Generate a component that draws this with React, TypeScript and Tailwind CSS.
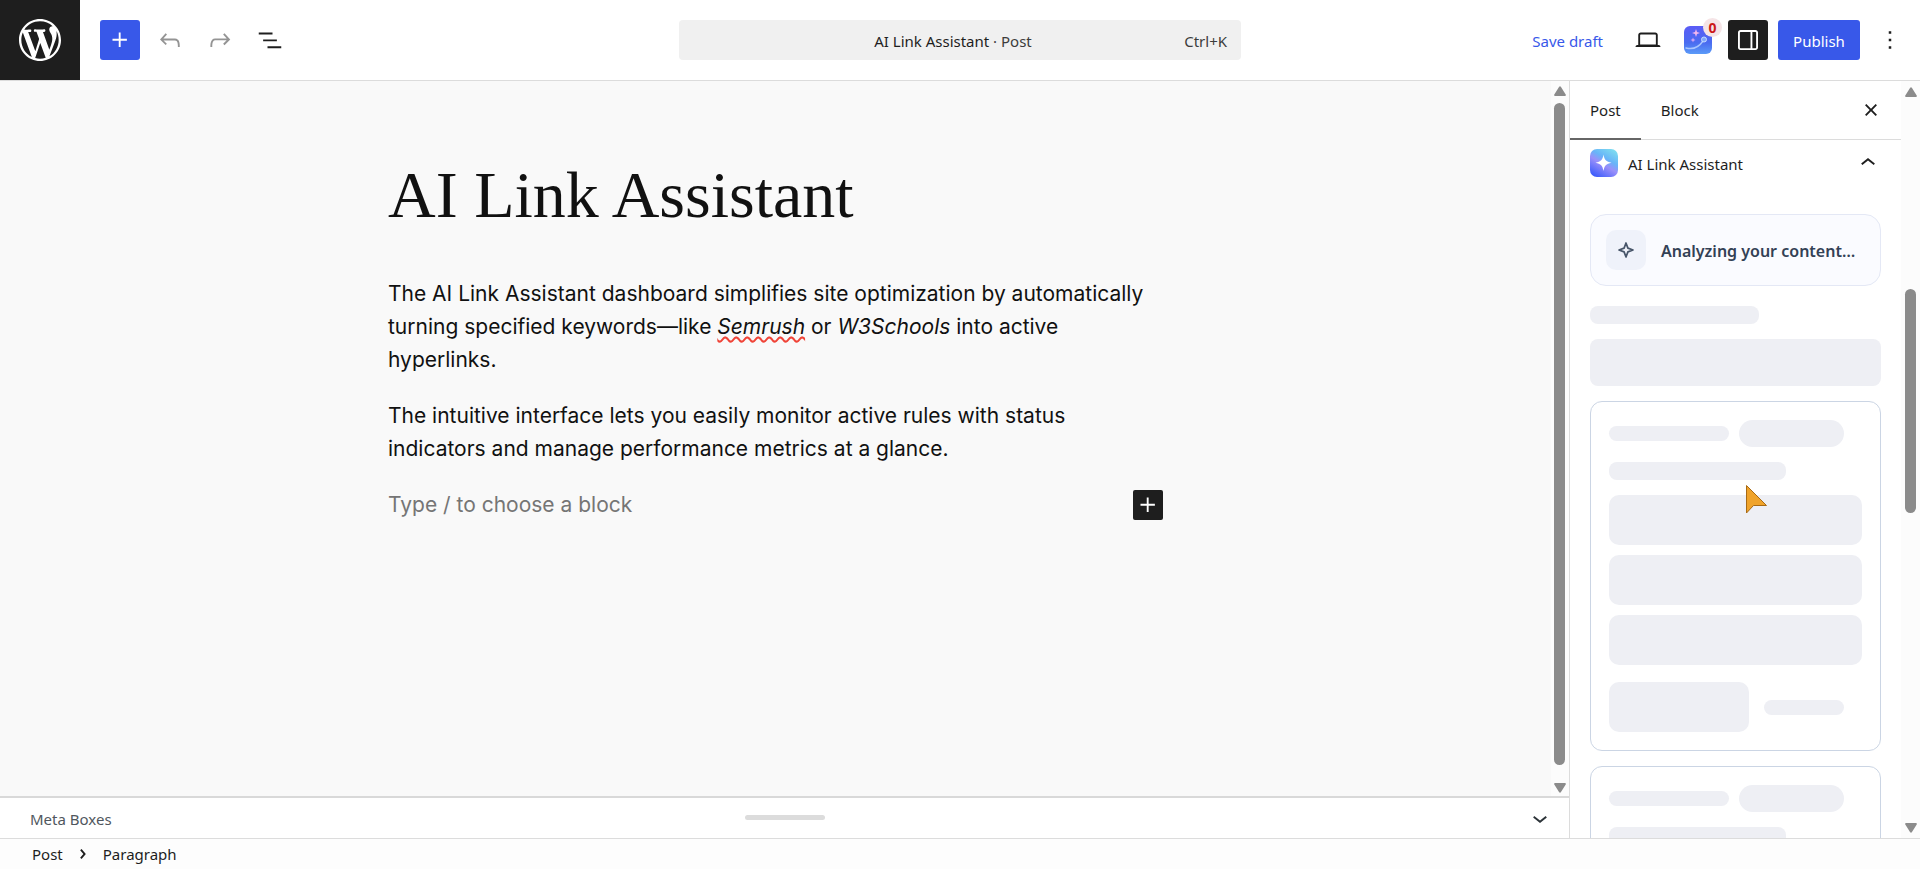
import React, { useState } from 'react';

const icons = {
  wordpress:
    'M20 10c0-5.51-4.49-10-10-10C4.48 0 0 4.49 0 10c0 5.52 4.48 10 10 10 5.51 0 10-4.48 10-10zM7.78 15.37L4.37 6.22c.55-.02 1.17-.08 1.17-.08.5-.06.44-1.13-.06-1.11 0 0-1.45.11-2.37.11-.18 0-.37 0-.58-.01C4.12 2.69 6.87 1.11 10 1.11c2.33 0 4.45.87 6.05 2.34-.68-.11-1.65.39-1.65 1.58 0 .74.45 1.36.9 2.1.35.61.55 1.36.55 2.46 0 1.49-1.4 5-1.4 5l-3.03-8.37c.54-.02.82-.17.82-.17.5-.05.44-1.25-.06-1.22 0 0-1.44.12-2.38.12-.87 0-2.33-.12-2.33-.12-.5-.03-.56 1.2-.06 1.22l.92.08 1.26 3.41zM17.41 10c.24-.64.74-1.87.43-4.25.7 1.29 1.05 2.71 1.05 4.25 0 3.29-1.73 6.24-4.4 7.78.97-2.59 1.94-5.2 2.92-7.78zM6.1 18.09C3.12 16.65 1.11 13.53 1.11 10c0-1.3.23-2.48.72-3.59C3.25 10.3 4.67 14.2 6.1 18.09zm4.03-6.63l2.58 6.98c-.86.29-1.76.45-2.71.45-.79 0-1.57-.11-2.29-.33.81-2.38 1.62-4.74 2.42-7.1z',
  plus: 'M11 12.5V17.5H12.5V12.5H17.5V11H12.5V6H11V11H6V12.5H11Z',
  undo: 'M18.3 11.7c-.6-.6-1.4-.9-2.3-.9H6.7l2.9-3.3-1.1-1-4.5 5L8.5 16l1-1-2.7-2.7H16c.5 0 .9.2 1.3.5 1 1 1 3.4 1 4.5v.3h1.5v-.2c0-1.5 0-4.3-1.5-5.7z',
  redo: 'M15.6 6.5l-1.1 1 2.9 3.3H8c-.9 0-1.7.3-2.3.9-1.4 1.5-1.4 4.2-1.4 5.6v.2h1.5v-.3c0-1.1 0-3.5 1-4.5.3-.3.7-.5 1.3-.5h9.2L14.5 15l1.1 1.1 4.6-4.6-4.6-5z',
  listView: 'M3 6h11v1.5H3V6Zm3.5 5.5h11V13h-11v-1.5ZM21 17H10v1.5h11V17Z',
  desktop:
    'M20.5 16h-.7V8c0-1.1-.9-2-2-2H6.2c-1.1 0-2 .9-2 2v8h-.7c-.8 0-1.5.7-1.5 1.5h20c0-.8-.7-1.5-1.5-1.5zM5.7 8c0-.3.2-.5.5-.5h11.6c.3 0 .5.2.5.5v7.6H5.7V8z',
  drawer:
    'M18 4H6c-1.1 0-2 .9-2 2v12c0 1.1.9 2 2 2h12c1.1 0 2-.9 2-2V6c0-1.1-.9-2-2-2zm-4 14.5H6c-.3 0-.5-.2-.5-.5V6c0-.3.2-.5.5-.5h8v13zm4.5-.5c0 .3-.2.5-.5.5h-2.5v-13H18c.3 0 .5.2.5.5v12z',
  more: 'M13 19h-2v-2h2v2zm0-6h-2v-2h2v2zm0-6h-2V5h2v2z',
  close:
    'M12 13.06l3.712 3.713 1.061-1.06L13.061 12l3.712-3.712-1.06-1.06L12 10.938 8.288 7.227l-1.061 1.06L10.939 12l-3.712 3.712 1.06 1.061L12 13.061z',
  chevronUp: 'M6.5 12.4L12 8l5.5 4.4-.9 1.2L12 10l-4.5 3.6-1-1.2z',
  chevronDown: 'M17.5 11.6L12 16l-5.5-4.4.9-1.2L12 14l4.5-3.6 1 1.2z',
  chevronRight: 'M10.8622 8.04053L14.2805 12.0286L10.8622 16.0167L9.72327 15.0405L12.3049 12.0286L9.72327 9.01672L10.8622 8.04053Z',
};

function Icon({ name, className = 'size-[30px]' }: { name: keyof typeof icons; className?: string }) {
  return (
    <svg viewBox="0 0 24 24" className={`${className} shrink-0`} fill="currentColor" aria-hidden="true">
      <path d={icons[name]} />
    </svg>
  );
}

function LinkPluginIcon() {
  return (
    <svg viewBox="0 0 28 28" className="size-7" aria-hidden="true">
      <defs>
        <linearGradient id="plugin-bg" x1="0" y1="0" x2="0" y2="1">
          <stop offset="0" stopColor="#5b5cf6" />
          <stop offset="0.6" stopColor="#4a6cf0" />
          <stop offset="1" stopColor="#5b9bf8" />
        </linearGradient>
      </defs>
      <rect width="28" height="28" rx="6" fill="url(#plugin-bg)" />
      <path d="M12 3l1 3 3 1-3 1-1 3-1-3-3-1 3-1z" fill="#f3b7ee" />
      <path d="M9 11.500l.7 1.800 1.800.7-1.800.7L9 16.500l-.7-1.800-1.800-.7 1.800-.7z" fill="#d6a8f5" />
      <path d="M2 22c8 2 13-1 17-7" fill="none" stroke="#a9c6ff" strokeWidth="1.500" strokeLinecap="round" />
      <circle cx="20" cy="13.500" r="2.500" fill="#7fa6fb" stroke="#c5dbff" />
    </svg>
  );
}

function AssistantIcon() {
  return (
    <svg viewBox="0 0 28 28" className="size-7 shrink-0" aria-hidden="true">
      <defs>
        <linearGradient id="assistant-bg" x1="0.2" y1="1" x2="0.8" y2="0">
          <stop offset="0" stopColor="#3b5bfb" />
          <stop offset="0.450" stopColor="#9a90fa" />
          <stop offset="0.650" stopColor="#68b4f8" />
          <stop offset="1" stopColor="#7ddcf0" />
        </linearGradient>
      </defs>
      <rect width="28" height="28" rx="7" fill="url(#assistant-bg)" />
      <path d="M13.500 5.500C14.500 11 16 12.500 21.500 13.700C16 15 14.500 16.500 13.500 22C12.500 16.500 11 15 5.500 13.700C11 12.500 12.500 11 13.500 5.500z" fill="#fff" />
    </svg>
  );
}

function Arrow({ down = false }: { down?: boolean }) {
  return (
    <svg viewBox="0 0 12 10" className="h-2.5 w-3 shrink-0" fill="#8b8b8b" aria-hidden="true">
      {down ? (
        <path d="M1.200 0h9.600a1 1 0 0 1 .9 1.600L7 8.900a1.200 1.200 0 0 1-2 0L.3 1.600A1 1 0 0 1 1.200 0z" />
      ) : (
        <path d="M1.200 10h9.600a1 1 0 0 0 .9-1.600L7 1.100a1.200 1.200 0 0 0-2 0L.3 8.400A1 1 0 0 0 1.200 10z" />
      )}
    </svg>
  );
}

function SkeletonCard() {
  return (
    <div className="flex shrink-0 flex-col rounded-xl border border-[#cbd5e4] p-[18px]">
      <div className="flex items-center gap-2.5">
        <div className="h-[15px] w-[120px] rounded-full bg-[#eeeff4]" />
        <div className="h-[27px] w-[105px] rounded-full bg-[#eeeff4]" />
      </div>
      <div className="mt-[15px] h-[18px] w-[177px] rounded-lg bg-[#eeeff4]" />
      <div className="mt-[15px] flex flex-col gap-2.5">
        <div className="h-[50px] rounded-[10px] bg-[#eeeff4]" />
        <div className="h-[50px] rounded-[10px] bg-[#eeeff4]" />
        <div className="h-[50px] rounded-[10px] bg-[#eeeff4]" />
      </div>
      <div className="mt-[17px] flex items-center gap-[15px]">
        <div className="h-[50px] w-[140px] rounded-[10px] bg-[#eeeff4]" />
        <div className="h-[15px] w-20 rounded-full bg-[#eeeff4]" />
      </div>
    </div>
  );
}

function Header() {
  return (
    <header className="flex h-[81px] shrink-0 items-center border-b border-[#dcdcdc] bg-white">
      <div className="flex flex-1 items-center">
        <a href="#" aria-label="View Posts" className="flex size-20 items-center justify-center bg-[#1e1e1e] text-white">
          <svg viewBox="0 0 20 20" className="size-[42px]" fill="currentColor" aria-hidden="true">
            <path d={icons.wordpress} />
          </svg>
        </a>
        <div className="ml-5 flex items-center gap-2.5">
          <button aria-label="Block Inserter" className="flex size-10 items-center justify-center rounded-[3px] bg-[#3858e9] text-white">
            <Icon name="plus" />
          </button>
          <button aria-label="Undo" className="flex size-10 items-center justify-center text-[#949494]">
            <Icon name="undo" />
          </button>
          <button aria-label="Redo" className="flex size-10 items-center justify-center text-[#949494]">
            <Icon name="redo" />
          </button>
          <button aria-label="Document Overview" className="flex size-10 items-center justify-center">
            <Icon name="listView" />
          </button>
        </div>
      </div>

      <button className="grid h-10 w-[562px] grid-cols-[1fr_auto_1fr] items-center rounded-[4px] bg-[#f0f0f0] pt-0.5 pr-3.5">
        <span />
        <span>
          AI Link Assistant <span className="text-[#3c3c3c]">· Post</span>
        </span>
        <span className="text-right text-[#3c3c3c]">Ctrl+K</span>
      </button>

      <div className="flex flex-1 items-center justify-end gap-2.5">
        <button className="px-[15px] pt-0.5 text-[#3858e9]">Save draft</button>
        <button aria-label="View" className="flex size-10 items-center justify-center">
          <Icon name="desktop" />
        </button>
        <button aria-label="Link plugin" className="relative flex size-10 items-center justify-center">
          <LinkPluginIcon />
          <span className="absolute -top-0.5 -right-1 flex size-[19px] items-center justify-center rounded-full bg-[#f5e4e6] text-sm font-bold text-[#cc1818]">
            0
          </span>
        </button>
        <button aria-label="Settings" className="flex size-10 items-center justify-center rounded-[3px] bg-[#1e1e1e] text-white">
          <Icon name="drawer" />
        </button>
        <button className="h-10 w-[82px] rounded-[3px] bg-[#3858e9] pt-0.5 text-white">Publish</button>
        <button aria-label="Options" className="mr-2.5 flex size-10 items-center justify-center">
          <Icon name="more" />
        </button>
      </div>
    </header>
  );
}

function Canvas() {
  return (
    <div className="flex min-h-0 flex-1 bg-[#f9f9f9]">
      <main className="flex-1 overflow-hidden pt-[70px]">
        <article className="mx-auto w-[775px] font-['Inter',sans-serif] text-[21px] leading-[33px] text-[#111]">
          <h1 className="font-['Liberation_Serif',serif] text-[66px] leading-[88px] font-normal">AI Link Assistant</h1>
          <p className="mt-[38px]">
            The AI Link Assistant dashboard simplifies site optimization by automatically turning specified keywords—like{' '}
            <em className="underline decoration-[#f04438] decoration-wavy decoration-auto underline-offset-2">Semrush</em> or{' '}
            <em>W3Schools</em> into active hyperlinks.
          </p>
          <p className="mt-[23px]">
            The intuitive interface lets you easily monitor active rules with status indicators and manage performance metrics at a
            glance.
          </p>
          <div className="mt-[23px] flex items-center justify-between">
            <p className="text-[#757575]">Type / to choose a block</p>
            <button aria-label="Add block" className="flex size-[30px] items-center justify-center rounded-[2px] bg-[#1e1e1e] text-white">
              <Icon name="plus" />
            </button>
          </div>
        </article>
      </main>
      <div className="flex w-[18px] shrink-0 flex-col items-center bg-[#fcfcfc] pt-[5px] pr-px pb-[3px]">
        <Arrow />
        <div className="mt-[7px] mb-[18px] w-[11px] flex-1 rounded-full bg-[#8b8b8b]" />
        <Arrow down />
      </div>
    </div>
  );
}

function MetaBoxes() {
  return (
    <div className="relative flex h-[42px] shrink-0 items-center justify-between border-t-2 border-[#d9d9d9] bg-white pr-3.5 pl-[30px] text-[#50575e]">
      <span className="pt-0.5">Meta Boxes</span>
      <button aria-label="Toggle meta boxes" className="text-[#2c3338]">
        <Icon name="chevronDown" />
      </button>
      <div className="absolute top-[17px] left-1/2 h-[5px] w-20 -translate-x-1/2 rounded-full bg-[#dcdcdc]" />
    </div>
  );
}

function Sidebar() {
  const [tab, setTab] = useState('Post');

  return (
    <aside className="flex w-[351px] shrink-0 border-l border-[#dcdcdc] bg-white">
      <div className="flex min-w-0 flex-1 flex-col overflow-hidden">
        <div className="flex h-[59px] shrink-0 items-center border-b border-[#dcdcdc] pr-[15px]">
          {['Post', 'Block'].map((name) => (
            <button
              key={name}
              onClick={() => setTab(name)}
              className={`h-[59px] border-b-2 px-5 pt-0.5 ${tab === name ? 'border-[#666]' : 'border-transparent'}`}
            >
              {name}
            </button>
          ))}
          <button aria-label="Close Settings" className="ml-auto">
            <Icon name="close" />
          </button>
        </div>

        <div className="flex flex-col px-5 pt-[9px]">
          <button className="flex h-7 shrink-0 items-center text-left">
            <AssistantIcon />
            <span className="ml-2.5 flex-1 pt-0.5">AI Link Assistant</span>
            <Icon name="chevronUp" className="-mr-0.5 size-[30px]" />
          </button>

          <div className="mt-[37px] flex h-[72px] shrink-0 items-center gap-[15px] rounded-2xl border border-[#e4e8f5] bg-[#fafbff] px-[15px]">
            <div className="flex size-10 items-center justify-center rounded-[10px] bg-[#eff2fa]">
              <svg viewBox="0 0 16 16" className="size-4" fill="none" stroke="#475569" strokeWidth="1.700" strokeLinejoin="round" aria-hidden="true">
                <path d="M8 1L9.900 6.100L15 8L9.900 9.900L8 15L6.100 9.900L1 8L6.100 6.100z" />
              </svg>
            </div>
            <p className="pt-0.5 text-base font-semibold text-[#334155]">Analyzing your content…</p>
          </div>

          <div className="mt-5 h-[18px] w-[169px] shrink-0 rounded-lg bg-[#eeeff4]" />
          <div className="mt-[15px] mb-[15px] h-[47px] shrink-0 rounded-lg bg-[#eeeff4]" />
          <div className="flex flex-col gap-[15px]">
            <SkeletonCard />
            <SkeletonCard />
          </div>
        </div>
      </div>

      <div className="flex w-[19px] shrink-0 flex-col items-center bg-[#fcfcfc] pt-1.5 pb-[5px]">
        <Arrow />
        <div className="flex flex-1 flex-col items-center pt-48 pb-[310px]">
          <div className="w-[11px] flex-1 rounded-full bg-[#8b8b8b]" />
        </div>
        <Arrow down />
      </div>
    </aside>
  );
}

export default function App() {
  return (
    <div className="flex h-screen flex-col overflow-hidden bg-white font-['Noto_Sans','Open_Sans',sans-serif] text-[15px] leading-5 text-[#1e1e1e]">
      <Header />
      <div className="flex min-h-0 flex-1">
        <div className="flex min-w-0 flex-1 flex-col">
          <Canvas />
          <MetaBoxes />
        </div>
        <Sidebar />
      </div>
      <footer className="flex h-[31px] shrink-0 items-center border-t border-[#dcdcdc] bg-[#fdfdfd] px-8">
        <a href="#">Post</a>
        <Icon name="chevronRight" className="mx-[5px] size-[30px]" />
        <span>Paragraph</span>
      </footer>
      <svg viewBox="0 0 22 30" className="pointer-events-none absolute top-[484px] right-[152px] h-[30px] w-[22px]" aria-hidden="true">
        <path d="M.500 1.500L20.500 21.500H7.500L.500 29z" fill="#f0a32a" stroke="#a86a14" />
      </svg>
    </div>
  );
}
